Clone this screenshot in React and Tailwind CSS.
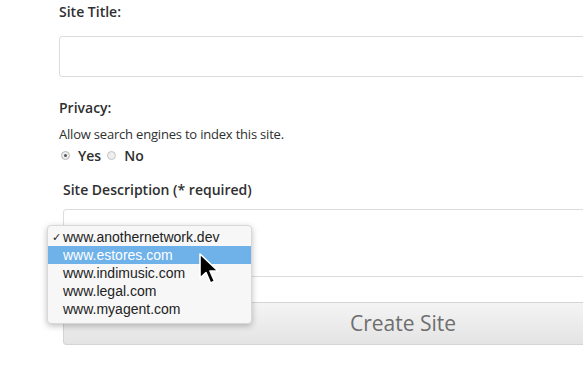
import React from "react";

const sites = [
  "www.anothernetwork.dev",
  "www.estores.com",
  "www.indimusic.com",
  "www.legal.com",
  "www.myagent.com",
];

export default function App() {
  return (
    <div className="relative w-[583px] h-[373px] overflow-hidden bg-white text-[#2f2f2f]" style={{ fontFamily: '"Open Sans", sans-serif' }}>
      <div className="pl-[59px] pt-[2px] flex flex-col">
        <div className="text-[14px] font-semibold leading-[19px]">Site Title:</div>
        <div className="mt-[15px] w-[700px] h-[41px] border border-[#dcdcdc] rounded-[3px] bg-white" />
        <div className="mt-[21px] text-[14px] font-semibold leading-[19px]">Privacy:</div>
        <div className="mt-[8px] text-[13px] tracking-[-0.2px] leading-[18px]">Allow search engines to index this site.</div>
        <div className="mt-[2px] flex items-center h-[20px] text-[14px] font-semibold">
          <span className="ml-[2px] w-[9px] h-[9px] rounded-full border border-[#b5b5b5] bg-[#eee] flex items-center justify-center">
            <span className="w-[3px] h-[3px] rounded-full bg-[#555]" />
          </span>
          <span className="ml-[8px]">Yes</span>
          <span className="ml-[6px] w-[9px] h-[9px] rounded-full border border-[#c4c4c4] bg-[#eee]" />
          <span className="ml-[8px]">No</span>
        </div>
        <div className="pl-[4px] mt-[15px] text-[14px] font-semibold leading-[19px]">Site Description (* required)</div>
        <div className="ml-[4px] mt-[10px] w-[700px] h-[68px] border border-[#dcdcdc] rounded-[3px] bg-white" />
        <div className="ml-[4px] mt-[25px] w-[680px] h-[43px] border border-[#d4d4d4] rounded-[3px] bg-gradient-to-b from-[#f4f4f4] to-[#e4e4e4] flex items-center justify-center text-[21px] text-[#6e6e6e]">
          Create Site
        </div>
      </div>

      <div
        className="absolute left-[47px] top-[225px] w-[205px] pt-[2px] pb-[5px] rounded-[4px] border border-[#d8d8d8] bg-[#f7f7f7] shadow-[0_2px_6px_rgba(0,0,0,0.25)] text-[14px] text-[#222]"
        style={{ fontFamily: '"Liberation Sans", Arial, sans-serif' }}
      >
        {sites.map((s, i) => (
          <div
            key={s}
            className={
              "relative h-[18px] leading-[18px] pl-[15px] " +
              (i === 1 ? "bg-[#6fb2ea] text-white" : "")
            }
          >
            {i === 0 && <span className="absolute left-[4px] top-0 text-[11px]">✓</span>}
            {s}
          </div>
        ))}
      </div>

      <svg className="absolute left-[198px] top-[253px]" width="22" height="34" viewBox="0 0 22 34">
        <path d="M2 1 L2 25 L8 19.5 L12.5 30 L16.5 28.3 L12 18 L20 18 Z" fill="#000" stroke="#fff" strokeWidth="1.6" strokeLinejoin="round" />
      </svg>
    </div>
  );
}
